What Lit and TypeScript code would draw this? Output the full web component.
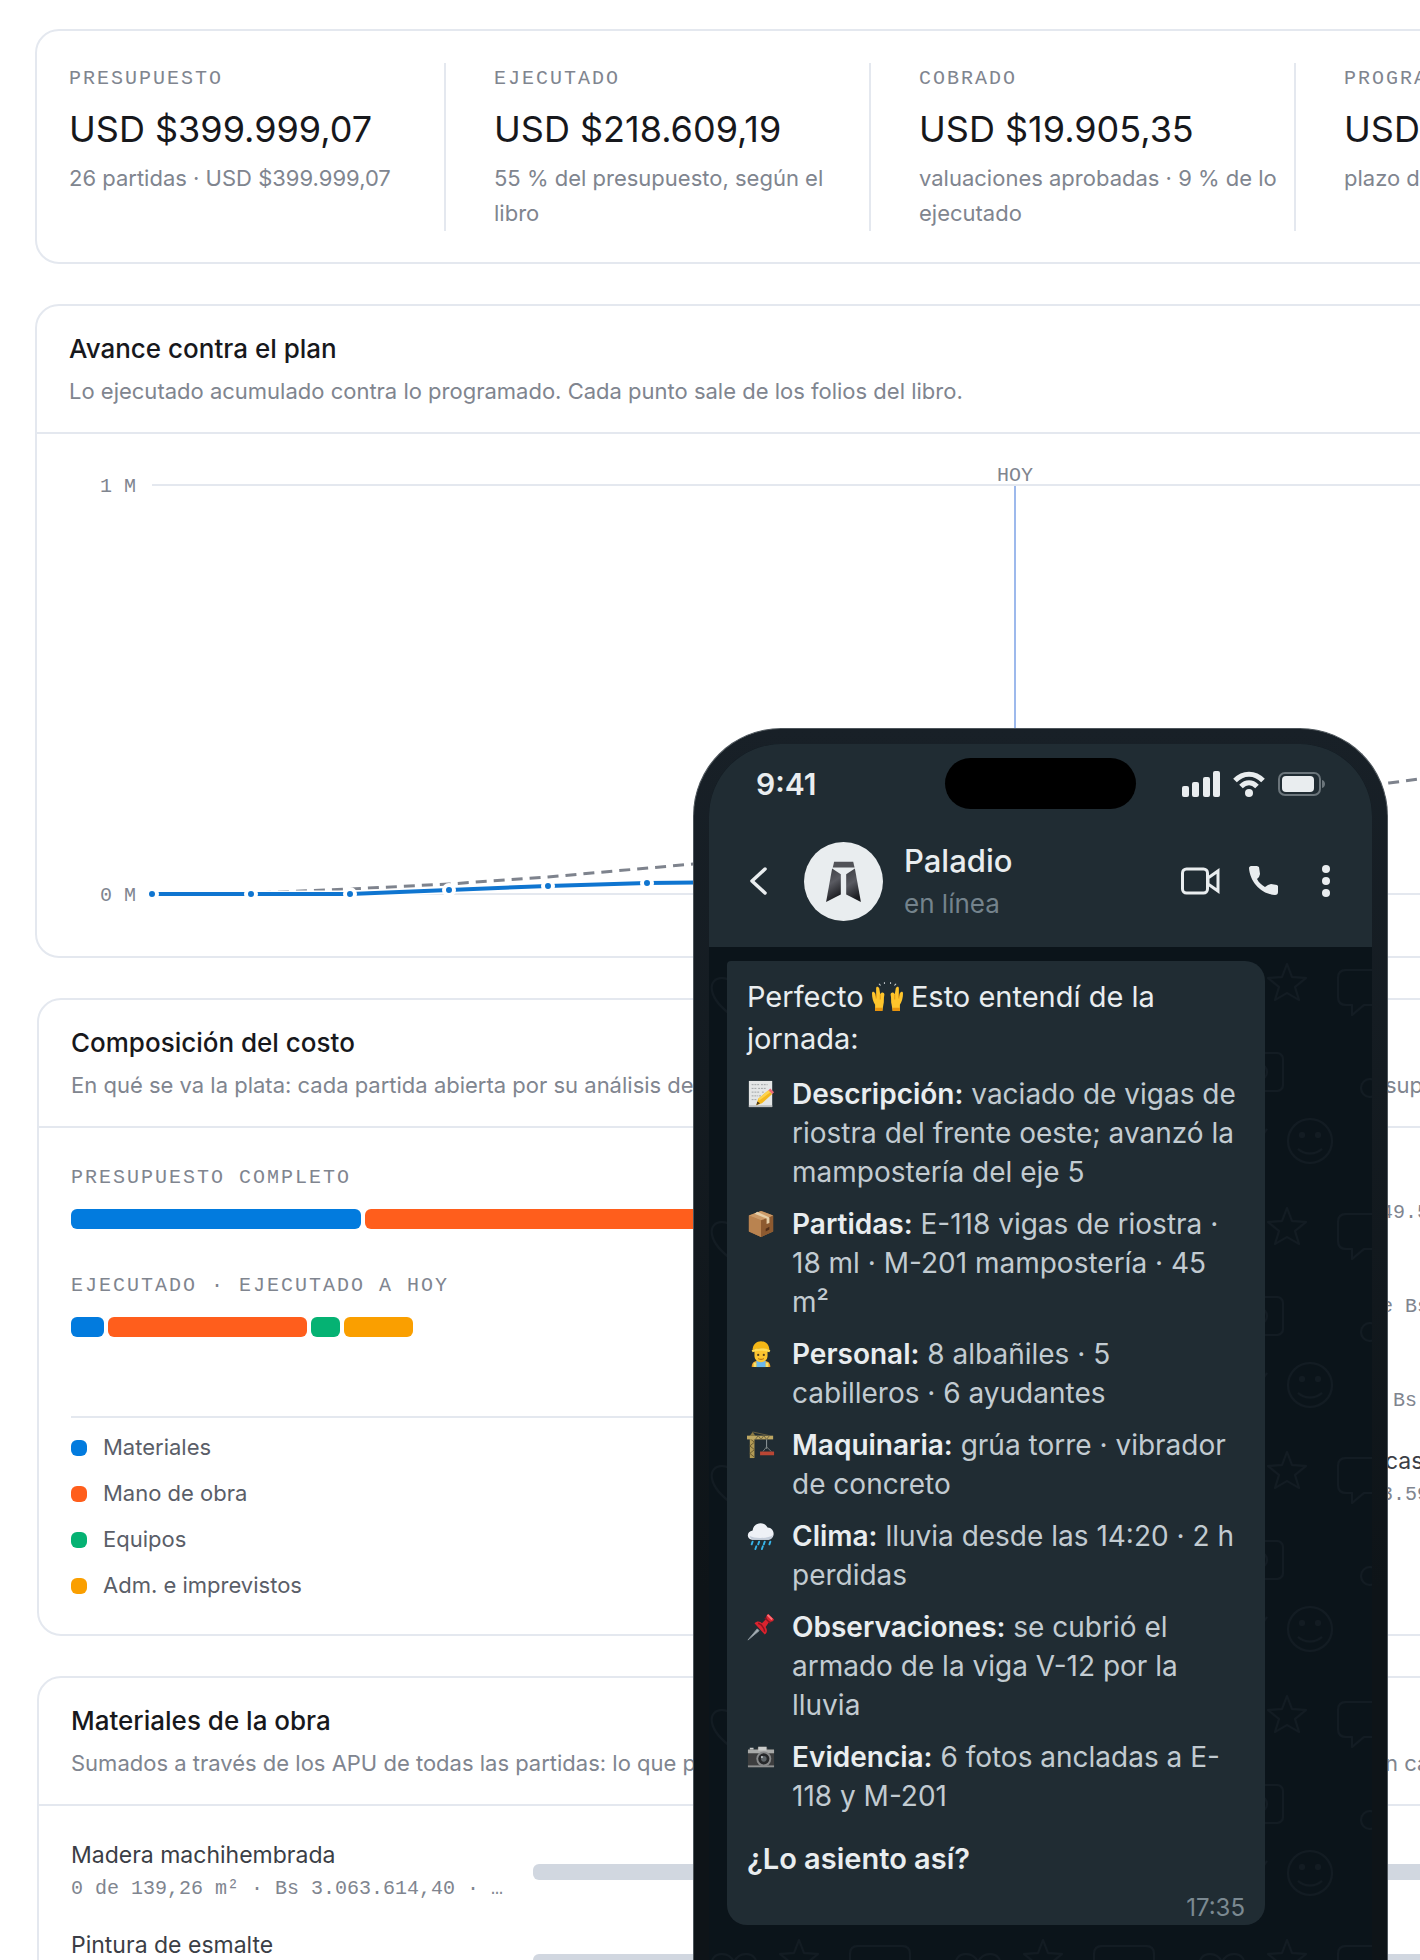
import { LitElement, html, css, svg, nothing } from "lit";
import { customElement, property } from "lit/decorators.js";

const BLUE = "#027bde";
const ORANGE = "#ff5e1c";
const GREEN = "#05b273";
const AMBER = "#fa9f00";

interface Stat { label: string; value: string; note: string; }
interface Segment { share: number; color: string; }

const STATS: Stat[] = [
  { label: "PRESUPUESTO", value: "USD $399.999,07", note: "26 partidas · USD $399.999,07" },
  { label: "EJECUTADO", value: "USD $218.609,19", note: "55 % del presupuesto, según el libro" },
  { label: "COBRADO", value: "USD $19.905,35", note: "valuaciones aprobadas · 9 % de lo ejecutado" },
  { label: "PROGRAMADO", value: "USD", note: "plazo de" },
];

const BUDGET: Segment[] = [
  { share: 22.1, color: BLUE },
  { share: 70, color: ORANGE },
];
const EXECUTED: Segment[] = [
  { share: 2.5, color: BLUE },
  { share: 15.2, color: ORANGE },
  { share: 2.2, color: GREEN },
  { share: 5.3, color: AMBER },
];
const LEGEND = [
  { name: "Materiales", color: BLUE },
  { name: "Mano de obra", color: ORANGE },
  { name: "Equipos", color: GREEN },
  { name: "Adm. e imprevistos", color: AMBER },
];
const SIDE = [
  { name: "", detail: "49.5" },
  { name: "", detail: "e Bs" },
  { name: "", detail: " Bs" },
  { name: "cas", detail: "3.59" },
];

const ICONS: Record<string, unknown> = {
  hands: svg`<g stroke="#c9ced1" stroke-width="1" stroke-linecap="round"><path d="M7 3l1 1M12 1.500v1M18 1.500v1M23 3l-1 1"/></g>
    <path d="M0 12c0-2 2-2 3 0l1 4V7c0-2 2-2 3 0l1 6c1-3 4-2 4 0-1 4 0 7-1 10l-1 6H3v-6c-2-3-3-7-3-11z" fill="#fec52c"/>
    <path d="M30 12c0-2-2-2-3 0l-1 4V7c0-2-2-2-3 0l-1 6c-1-3-4-2-4 0 1 4 0 7 1 10l1 6h7v-6c2-3 3-7 3-11z" fill="#fec52c"/>
    <path d="M3 26h7v3H3zM20 26h7v3h-7z" fill="#e8930c"/><path d="M4 12v5M8 13v5M22 13v5M26 12v5" stroke="#e39a14"/>`,
  note: svg`<path d="M2 1h25v28H2z" fill="#e4e6e6"/><path d="M2 27h25v2H2z" fill="#b9bcbd"/>
    <path d="M5 5h8m2 0h7M5 9h5m2 0h9M5 13h9m2 0h3M5 17h7m1 0h2M5 21h5" stroke="#9b9fa1" stroke-dasharray="2 1"/>
    <path d="M10 27l2-7 11-9 4 4-11 10z" fill="#f5b81d"/><path d="M12 20l11-9 2 2-12 9z" fill="#fdd34f"/><path d="M23 11l2-2 4 4-2 2z" fill="#ec6a77"/><path d="M10 27l1-4 3 2z" fill="#4c3a20"/>`,
  box: svg`<path d="M15 1l13 5v17l-13 6-13-6V6z" fill="#a6713f"/><path d="M2 6l13 5v18L2 23z" fill="#b98350"/><path d="M15 11l13-5v17l-13 6z" fill="#8d5a30"/>
    <path d="M15 1l13 5-13 5L2 6z" fill="#cb9a68"/><path d="M8 4l13 5v6l3-1V8L11 2z" fill="#e6cfa9"/><path d="M20 20l4-2v3l-4 2z" fill="#53301a"/>`,
  worker: svg`<path d="M5 29c0-5 3-7 10-7s10 2 10 7z" fill="#f19b1e"/><path d="M10 22h10v7H10z" fill="#69b7ec"/><path d="M7 24h3v5H7zM20 24h3v5h-3z" fill="#f4e16b"/>
    <path d="M8 10h14v7c0 9-14 9-14 0z" fill="#fdc62f"/><path d="M6 11C6-2 24-2 24 11c-5-2-13-2-18 0z" fill="#f3b616"/><path d="M5 11c6-3 14-3 20 0l-1 2c-6-2-12-2-18 0z" fill="#ffdb55"/>
    <circle cx="12" cy="16" r="1.200" fill="#59401a"/><circle cx="18" cy="16" r="1.200" fill="#59401a"/><path d="M12 20c2 1 4 1 6 0" stroke="#a3600f" fill="none"/>`,
  crane: svg`<path d="M3 5h5v24H3z" fill="#b19a55"/><path d="M3 8l5 4-5 4 5 4-5 4 5 4" stroke="#685a2f" fill="none"/><path d="M0 5h28v4H0z" fill="#bda762"/><path d="M3 5l3-4 3 4" fill="#8b7a43"/>
    <path d="M6 1l18 4M9 9l3-4 3 4 3-4 3 4 3-4" stroke="#6c6242" fill="none"/><path d="M21 9v10" stroke="#98a0a4"/><path d="M17 22l4-5 5 5" stroke="#77807f" fill="none"/><path d="M14 22h15v4H14z" fill="#b94634"/>`,
  rain: svg`<path d="M7 19c-8 0-8-9-1-10 1-9 13-10 16-3 8 0 9 12 1 13z" fill="#eef1f6"/><path d="M3 15c5 3 20 3 25-1-1 4-3 5-5 5H7c-2 0-4-2-4-4z" fill="#c5cedb"/>
    <path d="M6 21l-1 3M13 21l-1 3M19 21l-1 3M25 21l-1 3M10 26l-1 3M17 26l-1 3" stroke="#37b5ea" stroke-width="2" stroke-linecap="round"/>`,
  pin: svg`<path d="M1 29l10-12 2 2z" fill="#a8b2b8" stroke="#8b969c"/><path d="M8 11c3-3 6-2 8 0l5-5c-1-2 0-4 2-5l6 6c-1 2-3 3-5 2l-4 6c2 3 2 6-1 8z" fill="#d9232e"/>
    <path d="M12 11c3 1 6 4 7 9M19 5l6 6" stroke="#8d1220" fill="none" stroke-width="1.500"/><path d="M22 2l5 5" stroke="#ff7077" stroke-width="2"/>`,
  camera: svg`<path d="M2 7h8l2-3h9l2 3h5c1 0 1 0 1 1v17c0 1 0 1-1 1H2c-1 0-1 0-1-1V8c0-1 0-1 1-1z" fill="#3d3e3f"/><path d="M1 7h28v4H1z" fill="#a8aaa9"/><path d="M3 5h4v2H3zM12 4h9v4h-9z" fill="#c9cbca"/>
    <path d="M1 24h28v2H1z" fill="#8e9090"/><circle cx="18" cy="17" r="8" fill="#87898a"/><circle cx="18" cy="17" r="6" fill="#26282a"/><circle cx="18" cy="17" r="3" fill="#5d6468"/><circle cx="16" cy="15" r="1" fill="#cfd4d7"/>`,
};

const ITEMS = [
  { icon: "note", term: "Descripción:", text: "vaciado de vigas de riostra del frente oeste; avanzó la mampostería del eje 5" },
  { icon: "box", term: "Partidas:", text: "E-118 vigas de riostra · 18 ml · M-201 mampostería · 45 m²" },
  { icon: "worker", term: "Personal:", text: "8 albañiles · 5 cabilleros · 6 ayudantes" },
  { icon: "crane", term: "Maquinaria:", text: "grúa torre · vibrador de concreto" },
  { icon: "rain", term: "Clima:", text: "lluvia desde las 14:20 · 2 h perdidas" },
  { icon: "pin", term: "Observaciones:", text: "se cubrió el armado de la viga V-12 por la lluvia" },
  { icon: "camera", term: "Evidencia:", text: "6 fotos ancladas a E-118 y M-201" },
];

const tokens = css`
  :host {
    --line: #e4e8ef;
    --muted: #80858f;
    --ink: #17181c;
    --mono: "Liberation Mono", monospace;
    --sans: Inter, "Liberation Sans", sans-serif;
    box-sizing: border-box;
  }
  * { box-sizing: border-box; }
  h2, h3, p, ul, li, button { margin: 0; padding: 0; font-weight: 400; list-style: none; }
`;

@customElement("panel-card")
class PanelCard extends LitElement {
  @property() heading = "";
  @property() note = "";
  @property() aside = "";

  static styles = [tokens, css`
    :host { display: block; border: 2px solid var(--line); border-radius: 24px; background: #fff; overflow: hidden; }
    header { display: grid; grid-template-columns: minmax(0, 1fr) 340px; row-gap: 7px; padding: 25px 32px 23px; border-bottom: 2px solid var(--line); }
    h2 { grid-column: 1 / -1; font: 500 26px/36px var(--sans); color: var(--ink); }
    p { font: 400 22px/35px var(--sans); color: var(--muted); white-space: nowrap; }
    .tail { padding-left: 4px; }
  `];

  render() {
    return html`<header>
        <h2>${this.heading}</h2>
        <p>${this.note}</p>
        ${this.aside ? html`<p class="tail">${this.aside}</p>` : nothing}
      </header>
      <slot></slot>`;
  }
}

@customElement("progress-chart")
class ProgressChart extends LitElement {
  static styles = [tokens, css`
    :host { display: block; padding: 0 32px; height: 522px; }
    svg { display: block; width: 100%; height: 100%; overflow: visible; }
    text { font: 400 20px var(--mono); fill: var(--muted); }
    .grid { stroke: var(--line); stroke-width: 2; }
    .today { stroke: #9db9ec; stroke-width: 2; }
    .plan { fill: none; stroke: #7e838d; stroke-width: 3; stroke-dasharray: 11 7; }
    .halo { fill: none; stroke: #fff; stroke-width: 7; }
    .done { fill: none; stroke: #0f75d0; stroke-width: 4; }
    .dot { fill: #0f75d0; stroke: #fff; stroke-width: 4; }
  `];

  render() {
    const pts = [[83, 460], [182, 460], [281, 460], [380, 456], [479, 452], [578, 449]];
    const line = pts.map((p) => p.join(",")).join(" ") + " 677,448";
    return html`<svg role="img" aria-label="Avance contra el plan">
      <text x="31" y="58">1 M</text>
      <text x="31" y="467">0 M</text>
      <line class="grid" x1="83" x2="100%" y1="51" y2="51"></line>
      <line class="grid" x1="83" x2="100%" y1="460" y2="460"></line>
      <line class="today" x1="946" x2="946" y1="52" y2="460"></line>
      <text x="946" y="47" text-anchor="middle">HOY</text>
      <polyline class="plan" points="83,460 182,459 281,455 380,450 479,443 624,430 1000,392 1320,349 1380,341"></polyline>
      <polyline class="halo" points=${line}></polyline>
      <polyline class="done" points=${line}></polyline>
      ${pts.map((p) => svg`<circle class="dot" cx=${p[0]} cy=${p[1]} r="5"></circle>`)}
    </svg>`;
  }
}

@customElement("chat-phone")
class ChatPhone extends LitElement {
  static styles = [tokens, css`
    :host { display: flex; flex-direction: column; padding: 15px 15px 0; border: 1px solid #4d555b; border-bottom: 0;
      border-radius: 88px 88px 0 0; background: linear-gradient(#182027, #0e1418 70%); font-family: var(--sans); color: #e9edef; }
    .screen { flex: 1; display: flex; flex-direction: column; border-radius: 72px 72px 0 0; overflow: hidden; background: #0b141a; }
    .top { background: #202c33; }
    .status { display: grid; grid-template-columns: 1fr 191px 1fr; align-items: center; padding: 14px 47px 0; }
    .clock { font: 600 30px/36px var(--sans); }
    .island { height: 51px; border-radius: 26px; background: #000; }
    .signals { display: flex; justify-content: flex-end; align-items: center; gap: 13px; }
    .bar { display: flex; align-items: center; padding: 27px 32px 21px 41px; }
    .avatar { width: 79px; height: 79px; margin-left: 37px; flex: none; }
    .who { flex: 1; padding: 4px 0 0 21px; }
    .who h2 { font: 500 31px/42px var(--sans); }
    .who p { font: 400 26px/44px var(--sans); color: #74838c; }
    button { display: block; background: none; border: 0; color: inherit; cursor: pointer; }
    .actions { display: flex; align-items: center; gap: 28px; }
    svg { display: block; }
    .chat { flex: 1; position: relative; padding: 14px 18px; }
    .doodles { position: absolute; inset: 0; width: 100%; height: 100%; }
    .bubble { position: relative; width: 538px; padding: 15px 20px 0; border-radius: 4px 20px 20px 20px; background: #202c33; }
    .bubble .lead { font: 400 29px/42px var(--sans); }
    .lead svg { display: inline-block; vertical-align: -5px; }
    ul { display: grid; gap: 13px; padding: 15px 0 0; }
    li { display: grid; grid-template-columns: 27px 448px; column-gap: 18px; font: 400 28px/39px var(--sans); color: #c2cbd1; }
    li svg { margin-top: 5px; }
    strong { font-weight: 600; color: #e9edef; }
    .ask { padding-top: 22px; font: 600 29px/42px var(--sans); }
    time { display: block; text-align: right; font: 400 24px/28px var(--sans); color: #7b8991; padding: 14px 0 3px; }
  `];

  private emoji(name: string, size: number) {
    return html`<svg width=${size} height=${size} viewBox="0 0 30 30" aria-hidden="true">${ICONS[name]}</svg>`;
  }

  render() {
    return html`<div class="screen">
      <div class="top">
        <div class="status">
          <span class="clock">9:41</span>
          <span class="island"></span>
          <span class="signals">
            <svg width="38" height="26" viewBox="0 0 38 26" fill="#e9edef"><rect y="15" width="7" height="11" rx="2"/><rect x="10" y="11" width="7" height="15" rx="2"/><rect x="21" y="6" width="7" height="20" rx="2"/><rect x="31" width="7" height="26" rx="2"/></svg>
            <svg width="32" height="26" viewBox="0 0 32 26" fill="none" stroke="#e9edef" stroke-width="5"><path d="M2 9.500C10 1 22 1 30 9.500"/><path d="M8 15.500c5-5 11-5 16 0"/><circle cx="16" cy="22" r="4" fill="#e9edef" stroke="none"/></svg>
            <svg width="47" height="24" viewBox="0 0 47 24"><rect x="1" y="1" width="41" height="22" rx="6" fill="none" stroke="#6b757b" stroke-width="2"/><rect x="4" y="4" width="32" height="16" rx="4" fill="#e9edef"/><path d="M44 8c4 1 4 7 0 8z" fill="#6b757b"/></svg>
          </span>
        </div>
        <div class="bar">
          <button aria-label="Volver"><svg width="17" height="28" viewBox="0 0 17 28" fill="none" stroke="#e9edef" stroke-width="3.500" stroke-linecap="round" stroke-linejoin="round"><path d="M15 2L2 14l13 12"/></svg></button>
          <svg class="avatar" viewBox="0 0 236 236" aria-hidden="true">
            <defs><linearGradient id="steel" x1="0" y1="0" x2="0.300" y2="1"><stop offset="0" stop-color="#3c3d42"/><stop offset="0.500" stop-color="#595a61"/><stop offset="1" stop-color="#1b1c20"/></linearGradient></defs>
            <circle cx="118" cy="118" r="118" fill="#e9edef"/>
            <path d="M90 59h57l4 17H86z" fill="#515257"/>
            <path d="M84 79l26 17v61l-12 6-32 16z" fill="url(#steel)"/><path d="M152 79l-26 17v61l12 6 32 16z" fill="url(#steel)"/>
          </svg>
          <div class="who"><h2>Paladio</h2><p>en línea</p></div>
          <div class="actions">
            <button aria-label="Videollamada"><svg width="39" height="28" viewBox="0 0 39 28" fill="none" stroke="#e9edef" stroke-width="3"><rect x="1.500" y="2" width="25" height="24" rx="4"/><path d="M27 11l10-7v20l-10-7z"/></svg></button>
            <button aria-label="Llamar"><svg width="32" height="32" viewBox="0 0 32 32" fill="#e9edef"><path d="M3 1h6l2 1 1 7-1 3-2 2c2 4 5 6 8 8l3-2 3-1 6 1 1 1v6c0 2-1 3-3 3C13 29 2 17 1 3c0-1 1-2 2-2z"/></svg></button>
            <button aria-label="Más opciones"><svg width="32" height="34" viewBox="0 0 32 34" fill="#e9edef"><circle cx="18" cy="5" r="4"/><circle cx="18" cy="17" r="4"/><circle cx="18" cy="29" r="4"/></svg></button>
          </div>
        </div>
      </div>
      <div class="chat">
        <svg class="doodles" aria-hidden="true">
          <defs><pattern id="doodle" width="244" height="244" patternUnits="userSpaceOnUse">
            <g fill="none" stroke="#131c23" stroke-width="2" stroke-linejoin="round">
              <path d="M25 70C-4 50-1 31 13 31c6 0 10 4 12 8 2-4 6-8 12-8 14 0 17 19-12 39z"/>
              <path d="M90 17l5 13 14 1-11 9 4 13-12-7-12 7 4-13-11-9 14-1z"/>
              <path d="M149 23h44q8 0 8 8v19q0 8-8 8h-26l-12 10v-10h-6q-8 0-8-8V31q0-8 8-8z"/>
              <rect x="38" y="106" width="48" height="38" rx="6"/><circle cx="62" cy="125" r="8"/>
              <circle cx="173" cy="141" r="9"/><path d="M60 196l10-14"/>
              <circle cx="113" cy="194" r="22"/><path d="M101 202c7 6 17 6 24 0"/>
              <g fill="#131c23"><circle cx="105" cy="188" r="2"/><circle cx="121" cy="188" r="2"/></g>
            </g></pattern></defs>
          <rect width="100%" height="100%" fill="url(#doodle)"></rect>
        </svg>
        <div class="bubble">
          <p class="lead">Perfecto ${this.emoji("hands", 31)} Esto entendí de la jornada:</p>
          <ul>
            ${ITEMS.map((i) => html`<li>${this.emoji(i.icon, 28)}<span><strong>${i.term}</strong> ${i.text}</span></li>`)}
          </ul>
          <p class="ask">¿Lo asiento así?</p>
          <time>17:35</time>
        </div>
      </div>
    </div>`;
  }
}

@customElement("app-root")
class AppRoot extends LitElement {
  static styles = [tokens, css`
    :host { display: block; position: relative; height: 100vh; overflow: hidden; background: #fff; font-family: var(--sans); }
    main { width: calc(100% + 372px); display: flex; flex-direction: column; gap: 40px; padding: 29px 37px 40px 35px; }
    .stats { display: grid; grid-template-columns: repeat(4, minmax(0, 1fr)); gap: 48px; padding: 32px 32px 31px; border: 2px solid var(--line); border-radius: 24px; background: #fff; }
    .stat + .stat { margin-left: -50px; padding-left: 48px; border-left: 2px solid var(--line); }
    .label { font: 400 20px/32px var(--mono); letter-spacing: 2px; color: var(--muted); }
    .value { margin: 10px 0 8px; font: 400 36px/48px var(--sans); color: var(--ink); white-space: nowrap; }
    .note { font: 400 22px/35px var(--sans); color: var(--muted); }
    .group { display: flex; flex-direction: column; gap: 40px; margin-left: 2px; }
    .cost { display: grid; grid-template-columns: minmax(0, 1fr) 340px; padding: 34px 32px 31px; }
    .cost .label { margin-bottom: 15px; }
    .track { display: flex; gap: 4px; height: 20px; margin-bottom: 41px; }
    .track i { display: block; border-radius: 6px; }
    .legend { display: grid; gap: 11px; margin-top: 79px; padding-top: 12px; border-top: 2px solid var(--line); }
    .legend li { display: flex; align-items: center; gap: 16px; font: 400 22px/35px var(--sans); color: #5a5e68; }
    .legend i { width: 16px; height: 16px; border-radius: 6px; }
    .side { display: grid; align-content: start; gap: 27px; }
    .name { min-height: 35px; font: 400 23px/35px var(--sans); color: #3b3e46; }
    .side .name { padding-left: 4px; }
    .detail { min-height: 32px; font: 400 20px/32px var(--mono); color: var(--muted); white-space: pre; }
    .rows { display: grid; gap: 23px; padding: 32px; }
    .row { display: grid; grid-template-columns: 430px 1fr; gap: 32px; align-items: center; }
    .meter { height: 16px; border-radius: 6px; background: #d1d7e0; }
    chat-phone { position: absolute; left: 693px; top: 728px; bottom: 0; width: 695px; }
  `];

  private track(segments: Segment[]) {
    return html`<div class="track">${segments.map((s) => html`<i style="width:${s.share}%;background:${s.color}"></i>`)}</div>`;
  }

  render() {
    return html`<main>
        <section class="stats">
          ${STATS.map((s) => html`<div class="stat"><h3 class="label">${s.label}</h3><p class="value">${s.value}</p><p class="note">${s.note}</p></div>`)}
        </section>
        <panel-card heading="Avance contra el plan" note="Lo ejecutado acumulado contra lo programado. Cada punto sale de los folios del libro.">
          <progress-chart></progress-chart>
        </panel-card>
        <div class="group">
          <panel-card heading="Composición del costo" note="En qué se va la plata: cada partida abierta por su análisis de" aside="supuesto">
            <div class="cost">
              <div>
                <h3 class="label">PRESUPUESTO COMPLETO</h3>
                ${this.track(BUDGET)}
                <h3 class="label">EJECUTADO · EJECUTADO A HOY</h3>
                ${this.track(EXECUTED)}
                <ul class="legend">${LEGEND.map((l) => html`<li><i style="background:${l.color}"></i>${l.name}</li>`)}</ul>
              </div>
              <div class="side">
                ${SIDE.map((r) => html`<div><p class="name">${r.name}</p><p class="detail">${r.detail}</p></div>`)}
              </div>
            </div>
          </panel-card>
          <panel-card heading="Materiales de la obra" note="Sumados a través de los APU de todas las partidas: lo que p" aside="n ca">
            <div class="rows">
              <div class="row"><div><p class="name">Madera machihembrada</p><p class="detail">0 de 139,26 m² · Bs 3.063.614,40 · …</p></div><div class="meter"></div></div>
              <div class="row"><div><p class="name">Pintura de esmalte</p><p class="detail"></p></div><div class="meter"></div></div>
            </div>
          </panel-card>
        </div>
      </main>
      <chat-phone></chat-phone>`;
  }
}
